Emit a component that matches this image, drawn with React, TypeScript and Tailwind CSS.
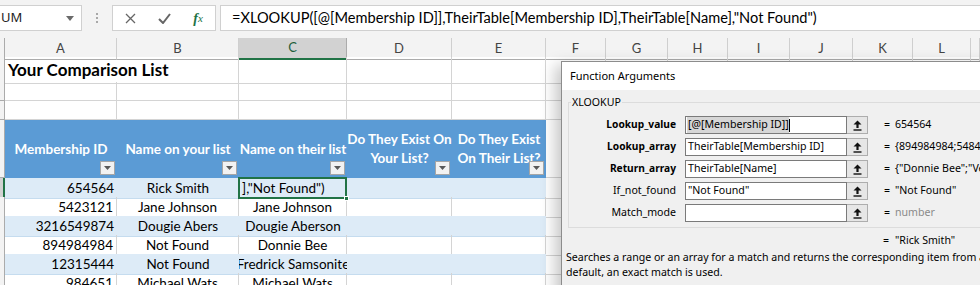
import React from 'react';

const GRID =
  'grid grid-cols-[5px_112px_122px_108px_105px_94px_60px_62px_60px_62px_63px_60px_58px_1fr]';
const LETTERS = ['A', 'B', 'C', 'D', 'E', 'F', 'G', 'H', 'I', 'J', 'K', 'L', ''];

const HEADERS = [
  'Membership ID',
  'Name on your list',
  'Name on their list',
  'Do They Exist On\nYour List?',
  'Do They Exist\nOn Their List?',
];

const ROWS: [string, string, string][] = [
  ['654564', 'Rick Smith', ''],
  ['5423121', 'Jane Johnson', 'Jane Johnson'],
  ['3216549874', 'Dougie Abers', 'Dougie Aberson'],
  ['894984984', 'Not Found', 'Donnie Bee'],
  ['12315444', 'Not Found', 'Fredrick Samsonite'],
  ['984651', 'Michael Wats', 'Michael Wats'],
];

const ARGS = [
  { label: 'Lookup_value', bold: true, input: '[@[Membership ID]]', value: '654564', selected: true },
  { label: 'Lookup_array', bold: true, input: 'TheirTable[Membership ID]', value: '{894984984;5484123;3216549874;12315444}' },
  { label: 'Return_array', bold: true, input: 'TheirTable[Name]', value: '{"Donnie Bee";"Vera Smith";"Jane Johnson"}' },
  { label: 'If_not_found', bold: false, input: '"Not Found"', value: '"Not Found"' },
  { label: 'Match_mode', bold: false, input: '', value: 'number', muted: true },
];

function Blank({ count }: { count: number }) {
  return (
    <>
      {Array.from({ length: count }, (_, i) => (
        <div key={i} className="border-b border-r border-[#d4d4d4]" />
      ))}
    </>
  );
}

function RowHead({ active }: { active?: boolean }) {
  return (
    <div
      className={
        active
          ? 'border-b border-r-2 border-b-[#ababab] border-r-[#217346] bg-[#d2d2d2]'
          : 'border-b border-r border-[#ababab] bg-[#f3f3f3]'
      }
    />
  );
}

function FilterButton() {
  return (
    <span className="absolute bottom-[3px] right-[2px] flex h-[14px] w-[15px] items-center justify-center border border-[#a6a6a6] bg-[#f2f2f2]">
      <svg width="7" height="4" viewBox="0 0 7 4">
        <path d="M0 0h7L3.5 4z" fill="#595959" />
      </svg>
    </span>
  );
}

function CollapseIcon() {
  return (
    <svg width="9" height="11" viewBox="0 0 9 11">
      <path d="M4.5 0.5 8.5 4.5H5.6V8H3.4V4.5H0.5z" fill="#111" />
      <rect x="0.5" y="9.3" width="8" height="1.4" fill="#111" />
    </svg>
  );
}

function FormulaBar() {
  return (
    <div className="flex h-[38px] items-start bg-[#f3f3f3] pt-[5px]">
      <div className="flex h-[26px] w-[82px] items-center border border-l-0 border-[#d0d0d0] bg-white">
        <span className="ml-[1px] flex-1 font-['Noto_Sans',sans-serif] text-[13px] text-[#222]">UM</span>
        <svg className="mr-[7px]" width="8" height="5" viewBox="0 0 8 5">
          <path d="M0 0h8L4 5z" fill="#6a6a6a" />
        </svg>
      </div>
      <div className="flex h-[26px] w-[30px] flex-col items-center justify-center gap-[2px]">
        <span className="h-[2px] w-[2px] bg-[#a8a8a8]" />
        <span className="h-[2px] w-[2px] bg-[#a8a8a8]" />
        <span className="h-[2px] w-[2px] bg-[#a8a8a8]" />
      </div>
      <div className="grid h-[26px] w-[104px] grid-cols-3 items-center border border-[#d0d0d0] bg-white">
        <div className="flex justify-center">
          <svg width="11" height="11" viewBox="0 0 11 11">
            <path d="M1 1l9 9M10 1l-9 9" stroke="#666" strokeWidth="1.3" />
          </svg>
        </div>
        <div className="flex justify-center">
          <svg width="13" height="11" viewBox="0 0 13 11">
            <path d="M1 6l4 4 7-9" stroke="#666" strokeWidth="2" fill="none" />
          </svg>
        </div>
        <div className="flex justify-center font-['Liberation_Serif',serif] text-[14px] italic text-[#217346]">
          <span className="font-semibold">f</span>
          <span className="text-[11px] leading-[20px]">x</span>
        </div>
      </div>
      <div className="ml-[4px] flex h-[26px] flex-1 items-center border border-r-0 border-[#d0d0d0] bg-white pl-[11px] text-[14.6px] text-black">
        =XLOOKUP([@[Membership ID]],TheirTable[Membership ID],TheirTable[Name],"Not Found")
      </div>
    </div>
  );
}

function ColumnHeaders() {
  return (
    <div className={`${GRID} h-[19px] bg-[#f3f3f3] text-[13px] text-[#444]`}>
      <div className="border-b border-r border-[#ababab]" />
      {LETTERS.map((l) =>
        l === 'C' ? (
          <div key={l} className="flex items-center justify-center border-b-2 border-r border-b-[#217346] border-r-[#ababab] bg-[#d2d2d2] text-[#1e5e3a]">
            {l}
          </div>
        ) : (
          <div key={l || 'm'} className="flex items-center justify-center border-b border-r border-b-[#ababab] border-r-[#cfcfcf]">
            {l}
          </div>
        ),
      )}
    </div>
  );
}

function Sheet() {
  return (
    <div className="text-[13.5px] text-black">
      <div className={`${GRID} h-[25px]`}>
        <RowHead />
        <div className="flex items-center whitespace-nowrap border-b border-[#d4d4d4] pl-[3px] text-[17px] font-bold">
          Your Comparison List
        </div>
        <Blank count={12} />
      </div>
      <div className={`${GRID} h-[19px]`}>
        <RowHead />
        <Blank count={13} />
      </div>
      <div className={`${GRID} h-[19px]`}>
        <RowHead />
        <Blank count={13} />
      </div>
      <div className={`${GRID} h-[58px]`}>
        <RowHead />
        {HEADERS.map((h) => (
          <div
            key={h}
            className="relative flex items-center justify-center whitespace-pre-line bg-[#5b9bd5] text-center font-bold leading-[19px] text-white"
          >
            {h}
            <FilterButton />
          </div>
        ))}
        <Blank count={8} />
      </div>
      {ROWS.map((row, i) => {
        const band = i % 2 === 0;
        const cell = band
          ? 'border-b border-[#c5dcef] bg-[#ddebf7]'
          : 'border-b border-r border-b-[#c5dcef] border-r-[#d4d4d4]';
        return (
          <div key={row[0]} className={`${GRID} h-[19px]`}>
            <RowHead active={i === 0} />
            <div className={`${cell} flex items-center justify-end pr-[3px]`}>{row[0]}</div>
            <div className={`${cell} flex items-center justify-center whitespace-nowrap`}>{row[1]}</div>
            {i === 0 ? (
              <div className={`${cell} relative flex items-center pl-[3px]`}>
                ],"Not Found")
                <span className="absolute -left-[1px] -top-[1px] bottom-[-1px] right-0 border-2 border-[#217346]" />
                <span className="absolute -bottom-[3px] -right-[2px] h-[5px] w-[5px] border border-white bg-[#217346]" />
              </div>
            ) : (
              <div className={`${cell} flex items-center justify-center overflow-hidden whitespace-nowrap`}>
                <span className="shrink-0">{row[2]}</span>
              </div>
            )}
            <div className={cell} />
            <div className={cell} />
            <Blank count={8} />
          </div>
        );
      })}
    </div>
  );
}

function FunctionArguments() {
  return (
    <div className="absolute left-[561px] top-[61px] h-[240px] w-[440px] border border-[#8c8c8c] bg-[#f0f0f0] font-['Noto_Sans',sans-serif] text-[10.6px] text-black shadow-[-6px_4px_14px_rgba(0,0,0,0.22)]">
      <div className="flex h-[28px] items-center bg-white pl-[8px] text-[11px]">Function Arguments</div>
      <fieldset className="ml-[6px] mt-[5px] w-[430px] border border-[#dcdcdc] pb-[3px] pt-[4px]">
        <legend className="ml-[2px] px-[1px] leading-[15px]">XLOOKUP</legend>
        {ARGS.map((a) => (
          <div key={a.label} className="flex h-[22px] items-center">
            <span className={`w-[107px] text-right ${a.bold ? 'text-[10.2px] font-bold' : ''}`}>{a.label}</span>
            <div className="ml-[9px] flex h-[18px] w-[162px] items-center border border-[#7a7a7a] bg-white pl-[1px]">
              {a.selected ? (
                <>
                  <span className="bg-[#d6d6d6] pl-[1px]">{a.input}</span>
                  <span className="h-[13px] w-[1px] bg-black" />
                </>
              ) : (
                <span className="pl-[1px]">{a.input}</span>
              )}
            </div>
            <div className="flex h-[18px] w-[21px] items-center justify-center border-y border-r border-[#adadad] bg-[#e6e6e6]">
              <CollapseIcon />
            </div>
            <span className="ml-[16px] w-[11px]">=</span>
            <span className={`whitespace-nowrap ${a.muted ? 'text-[#8a8a8a]' : ''}`}>{a.value}</span>
          </div>
        ))}
      </fieldset>
      <div className="mt-[5px] flex h-[16px] items-center pl-[321px]">
        <span className="w-[12px]">=</span>
        <span>"Rick Smith"</span>
      </div>
      <p className="mt-[1px] whitespace-nowrap pl-[4px] leading-[15px]">
        Searches a range or an array for a match and returns the corresponding item from a second range or array. By
        <br />
        default, an exact match is used.
      </p>
    </div>
  );
}

export default function App() {
  return (
    <div className="relative h-[285px] w-[980px] overflow-hidden bg-white font-['Lato',sans-serif]">
      <FormulaBar />
      <ColumnHeaders />
      <Sheet />
      <FunctionArguments />
    </div>
  );
}
